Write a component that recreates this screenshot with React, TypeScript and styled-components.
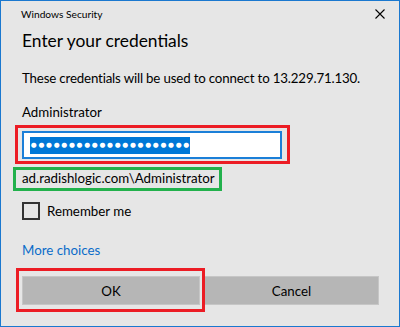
import React from "react";
import styled, { createGlobalStyle } from "styled-components";

const GlobalStyle = createGlobalStyle`
  html, body {
    margin: 0;
    padding: 0;
    background: #e6e6e6;
  }
  * {
    box-sizing: border-box;
  }
`;

const Window = styled.div`
  width: 400px;
  height: 327px;
  border: 1px solid #1a78cf;
  background: #e6e6e6;
  color: #000;
  font-family: Lato, "Segoe UI", sans-serif;
  display: flex;
  flex-direction: column;
`;

const TitleBar = styled.div`
  height: 26px;
  padding: 0 14px 0 20px;
  display: flex;
  align-items: center;
  justify-content: space-between;
`;

const TitleText = styled.span`
  font-size: 10.2px;
  line-height: 16px;
`;

const CloseButton = styled.button`
  width: 10px;
  height: 10px;
  padding: 0;
  border: none;
  background: none;
  display: flex;
`;

const Body = styled.div`
  padding: 0 21px;
  display: flex;
  flex-direction: column;
  align-items: flex-start;
`;

const Heading = styled.h1`
  margin: 2px 0 0;
  font-size: 17.4px;
  line-height: 24px;
  font-weight: 400;
`;

const Text = styled.p<{ $top: number }>`
  margin: ${(p) => p.$top}px 0 0;
  font-size: 13.3px;
  line-height: 20px;
  white-space: nowrap;
`;

const Description = styled(Text)`
  letter-spacing: -0.17px;
`;

/* annotation frames drawn over the screenshot */
const Highlight = styled.div<{ $color: string; $inset: string; $top?: number }>`
  position: relative;
  margin-top: ${(p) => p.$top ?? 0}px;

  &::after {
    content: "";
    position: absolute;
    inset: ${(p) => p.$inset};
    border: 3px solid ${(p) => p.$color};
    pointer-events: none;
  }
`;

const PasswordBox = styled.div`
  width: 260px;
  height: 28px;
  border: 2px solid #1b7fd8;
  background: #fff;
  padding: 4px 6px;
  display: flex;
  align-items: center;
`;

const Selection = styled.span`
  display: inline-flex;
  background: #0078d7;
  color: #fff;
  height: 17px;
  align-items: center;
`;

const Dot = styled.span`
  width: 7.64px;
  text-align: center;
  font-family: "DejaVu Sans", sans-serif;
  font-size: 6.8px;
  line-height: 17px;
`;

const Domain = styled.span`
  display: block;
  font-size: 13.3px;
  line-height: 16px;
`;

const CheckRow = styled.label`
  margin-top: 16px;
  display: flex;
  align-items: center;
  gap: 7px;
  font-size: 13.3px;
  line-height: 18px;
`;

const CheckBox = styled.span`
  width: 18px;
  height: 18px;
  border: 2px solid #333;
`;

const Link = styled.a`
  margin-top: 20px;
  font-size: 13.3px;
  line-height: 20px;
  color: #0a6cc9;
  text-decoration: none;
`;

const ButtonRow = styled.div`
  margin-top: 16px;
  width: 357px;
  display: grid;
  grid-template-columns: 178px 1fr;
  gap: 4px;
`;

const Button = styled.button`
  width: 100%;
  height: 29px;
  background: #b6b6b6;
  border: 1px solid #c6c6c6;
  font-family: inherit;
  font-size: 13.3px;
  color: #000;
  padding: 0;
`;

export default function App() {
  const dots = Array.from({ length: 21 });
  return (
    <>
      <GlobalStyle />
      <Window>
        <TitleBar>
          <TitleText>Windows Security</TitleText>
          <CloseButton aria-label="Close">
            <svg width="10" height="10" viewBox="0 0 10 10">
              <path d="M0.5 0.5 L9.5 9.5 M9.5 0.5 L0.5 9.5" stroke="#000" strokeWidth="1.1" />
            </svg>
          </CloseButton>
        </TitleBar>
        <Body>
          <Heading>Enter your credentials</Heading>
          <Description $top={15}>These credentials will be used to connect to 13.229.71.130.</Description>
          <Text $top={14}>Administrator</Text>
          <Highlight $color="#ec1c24" $inset="-6px -8px -5px -7px" $top={9}>
            <PasswordBox>
              <Selection>
                {dots.map((_, i) => (
                  <Dot key={i}>●</Dot>
                ))}
              </Selection>
            </PasswordBox>
          </Highlight>
          <Highlight $color="#22b14c" $inset="-3px -7px -5px -9px" $top={11}>
            <Domain>ad.radishlogic.com\Administrator</Domain>
          </Highlight>
          <CheckRow>
            <CheckBox />
            Remember me
          </CheckRow>
          <Link href="#">More choices</Link>
          <ButtonRow>
            <Highlight $color="#ec1c24" $inset="-8px -5px -7px -6px">
              <Button>OK</Button>
            </Highlight>
            <Button>Cancel</Button>
          </ButtonRow>
        </Body>
      </Window>
    </>
  );
}
